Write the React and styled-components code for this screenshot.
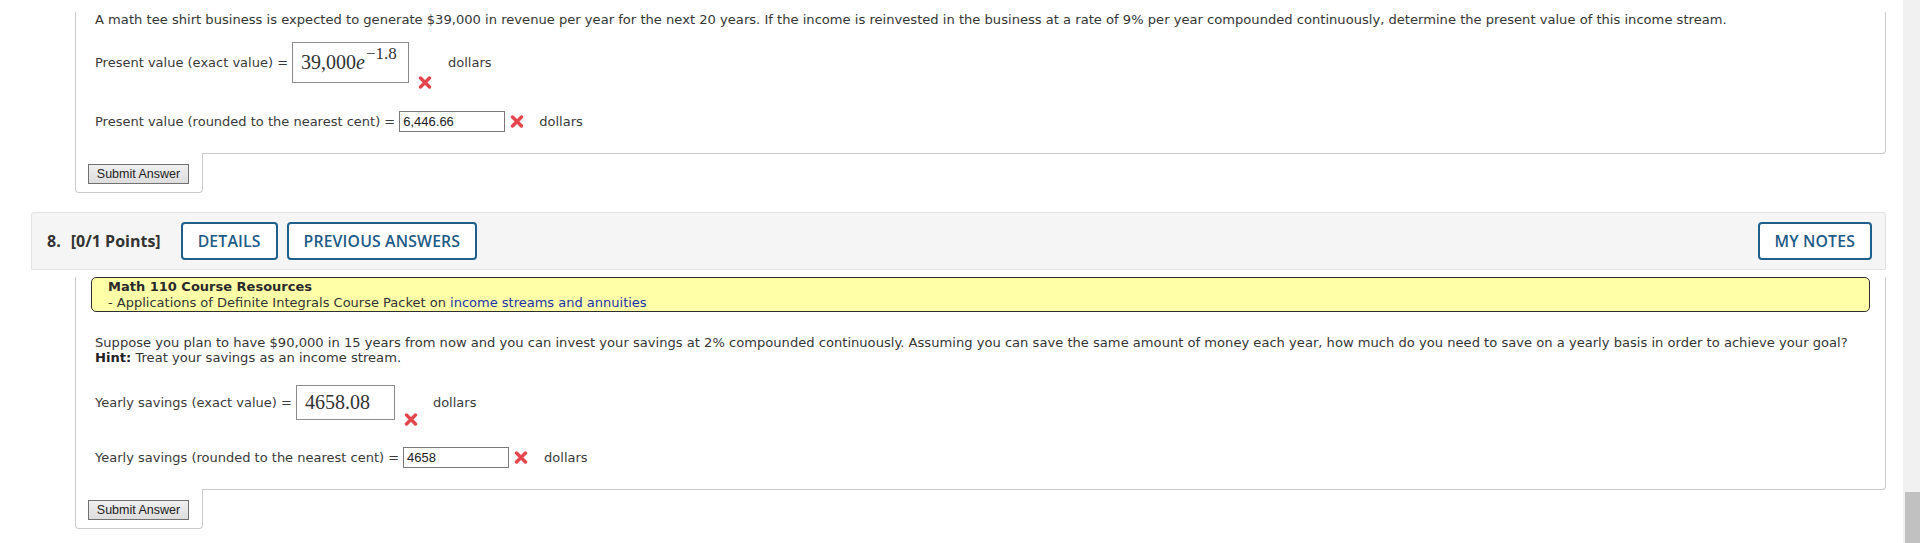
import React from 'react';
import styled, { createGlobalStyle } from 'styled-components';

const GlobalStyle = createGlobalStyle`
    html, body {
        margin:0;
        padding:0;
        background:#fff;
        overflow:hidden;
    }
    body {
        font-family:"DejaVu Sans", Verdana, sans-serif;
        color:#333;
    }
`

const XMark = ({ low }) => (
    <Mark $low={low}>
        <svg width="14" height="13" viewBox="0 0 14 13">
            <path d="M2.5 2 L11.5 11 M11.5 2 L2.5 11" stroke="#e5454c" strokeWidth="3.4" strokeLinecap="round" />
        </svg>
    </Mark>
);

const AnswerRow = ({ label, children, low, top, mark }) => (
    <Row $top={top}>
        <Label>{label}</Label>
        {children}
        <XMark low={low} />
        <Unit $gap={mark}>dollars</Unit>
    </Row>
);

const App = () => {
    return(
        <Page>
            <GlobalStyle />
            <Main>
                <Question>
                    <Body $cut>
                        <Content>
                            <Prompt $top={12}>
                                A math tee shirt business is expected to generate $39,000 in revenue per year for the next 20 years. If the income is reinvested in the business at a rate of 9% per year compounded continuously, determine the present value of this income stream.
                            </Prompt>
                            <AnswerRow label="Present value (exact value) =" top={15} low mark={16}>
                                <MathBox $w={117} $h={41}>
                                    39,000<i>e</i><Sup>−1.8</Sup>
                                </MathBox>
                            </AnswerRow>
                            <AnswerRow label="Present value (rounded to the nearest cent) =" top={28} mark={15}>
                                <Field readOnly value="6,446.66" />
                            </AnswerRow>
                        </Content>
                    </Body>
                    <Tab>
                        <SubmitButton>Submit Answer</SubmitButton>
                    </Tab>
                </Question>

                <Question>
                    <Header>
                        <Points><span>8.</span><span>[0/1 Points]</span></Points>
                        <HeaderButton>DETAILS</HeaderButton>
                        <HeaderButton>PREVIOUS ANSWERS</HeaderButton>
                        <HeaderButton $right>MY NOTES</HeaderButton>
                    </Header>
                    <Body>
                        <Notice>
                            <strong>Math 110 Course Resources</strong>
                            <div>- Applications of Definite Integrals Course Packet on <Link href="#">income streams and annuities</Link></div>
                        </Notice>
                        <Content>
                            <Prompt $top={23}>
                                Suppose you plan to have $90,000 in 15 years from now and you can invest your savings at 2% compounded continuously. Assuming you can save the same amount of money each year, how much do you need to save on a yearly basis in order to achieve your goal?
                                <br />
                                <b>Hint:</b> Treat your savings as an income stream.
                            </Prompt>
                            <AnswerRow label="Yearly savings (exact value) =" top={20} low mark={15}>
                                <MathBox $w={99} $h={35}>4658.08</MathBox>
                            </AnswerRow>
                            <AnswerRow label="Yearly savings (rounded to the nearest cent) =" top={27} mark={16}>
                                <Field readOnly value="4658" />
                            </AnswerRow>
                        </Content>
                    </Body>
                    <Tab>
                        <SubmitButton>Submit Answer</SubmitButton>
                    </Tab>
                </Question>
            </Main>
            <ScrollTrack>
                <ScrollThumb />
            </ScrollTrack>
        </Page>
    );
};

const Page = styled.div`
    display:flex;
    height:543px;
    overflow:hidden;
`
const Main = styled.div`
    flex:1;
    padding:0 17px 0 31px;
`
const ScrollTrack = styled.div`
    width:17px;
    background:#f1f1f1;
    display:flex;
    flex-direction:column;
    justify-content:flex-end;
    align-items:flex-end;
`
const ScrollThumb = styled.div`
    width:15px;
    height:51px;
    background:#c1c1c1;
`
const Question = styled.section`
    margin-bottom:19px;
`
const Body = styled.div`
    margin-left:44px;
    border:1px solid #cacaca;
    border-top:none;
    border-radius:0 0 4px 0;
    padding-bottom:21px;
`
const Content = styled.div`
    padding:0 19px;
`
const Prompt = styled.div`
    margin-top:${p => p.$top}px;
    font-size:13.1px;
    line-height:15px;
    color:#363636;
    b { color:#222; }
`
const Row = styled.div`
    display:flex;
    align-items:center;
    margin-top:${p => p.$top}px;
    font-size:13px;
    color:#3a3a3a;
`
const Label = styled.span`
    white-space:nowrap;
    margin-right:4px;
`
const MathBox = styled.div`
    box-sizing:border-box;
    width:${p => p.$w}px;
    height:${p => p.$h}px;
    border:1px solid #8c8c8c;
    padding:0 8px;
    display:flex;
    align-items:center;
    font-family:"Liberation Serif", "DejaVu Serif", serif;
    font-size:20px;
    color:#333;
    i { font-size:20px; }
`
const Sup = styled.span`
    font-size:17px;
    align-self:flex-start;
    margin-top:1px;
    margin-left:1px;
`
const Field = styled.input`
    box-sizing:border-box;
    width:106px;
    height:21px;
    border:1px solid #7a7a7a;
    padding:0 3px;
    font-family:"Liberation Sans", Arial, sans-serif;
    font-size:13px;
    color:#222;
    background:#fff;
    outline:none;
`
const Mark = styled.span`
    display:flex;
    margin-left:${p => p.$low ? 9 : 5}px;
    align-self:${p => p.$low ? 'flex-end' : 'center'};
    margin-bottom:${p => p.$low ? -6 : 0}px;
`
const Unit = styled.span`
    margin-left:${p => p.$gap}px;
`
const Tab = styled.div`
    box-sizing:border-box;
    width:128px;
    margin:-1px 0 0 44px;
    border:1px solid #cacaca;
    border-top:none;
    border-radius:0 0 4px 4px;
    background:#fff;
    padding:11px 12px 8px;
`
const SubmitButton = styled.button`
    box-sizing:border-box;
    width:101px;
    height:20px;
    padding:0;
    border:1px solid #707070;
    background:linear-gradient(#efefef, #dddddd);
    font-family:"Liberation Sans", Arial, sans-serif;
    font-size:12.5px;
    color:#222;
    display:block;
`
const Header = styled.div`
    box-sizing:border-box;
    height:58px;
    display:flex;
    align-items:center;
    gap:9px;
    padding:0 13px 0 15px;
    background:#f5f5f5;
    border:1px solid #e2e2e2;
    border-radius:3px 3px 0 0;
    font-family:"Open Sans", sans-serif;
`
const Points = styled.div`
    display:flex;
    gap:10px;
    margin-right:11px;
    font-size:16px;
    font-weight:700;
    color:#333;
`
const HeaderButton = styled.button`
    box-sizing:border-box;
    height:38px;
    padding:0 15px;
    margin-left:${p => p.$right ? 'auto' : '0'};
    border:2px solid #1e5f8c;
    border-radius:4px;
    background:#fff;
    font-family:"Open Sans", sans-serif;
    font-size:15.8px;
    font-weight:600;
    letter-spacing:0.15px;
    color:#1f5b87;
`
const Notice = styled.div`
    margin:7px 15px 0;
    border:1px solid #2f2f2f;
    border-radius:5px;
    background:#ffffa8;
    padding:1px 16px 0;
    font-size:13px;
    line-height:16px;
    color:#333;
    strong { color:#2a2a2a; }
`
const Link = styled.a`
    color:#2233aa;
    text-decoration:none;
`

export default App;
